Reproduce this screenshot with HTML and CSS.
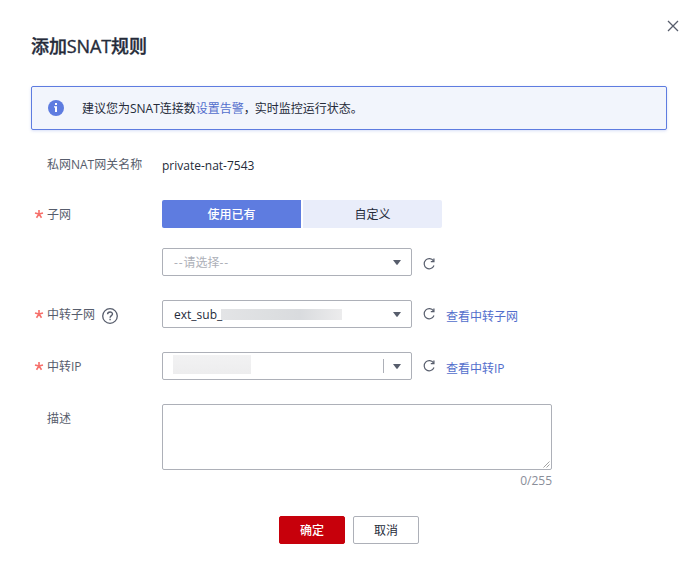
FILE: index.html
```html
<!DOCTYPE html>
<html lang="zh-CN">
<head>
<meta charset="utf-8">
<title>添加SNAT规则</title>
<link rel="stylesheet" href="styles.css">
</head>
<body>
<svg class="defs" width="0" height="0" aria-hidden="true">
  <symbol id="refresh" viewBox="0 0 14 14">
    <path d="M11.5 3.8A5.1 5.1 0 1 0 12 8.6" fill="none" stroke="currentColor" stroke-width="1.2"/>
    <path d="M11.9 1.6V4.6H8.8" fill="none" stroke="currentColor" stroke-width="1.3"/>
  </symbol>
  <symbol id="caret" viewBox="0 0 8 5"><path d="M0 0H8L4.6 4.6Q4 5.2 3.4 4.6Z" fill="currentColor"/></symbol>
  <symbol id="star" viewBox="0 0 10 10">
    <path d="M5 5V1M5 5L1 3.9M5 5L9 3.9M5 5L2.5 8.7M5 5L7.5 8.7" stroke="currentColor" stroke-width="1.6" fill="none"/>
  </symbol>
</svg>
<main class="dialog">
  <button class="close" aria-label="关闭">
    <svg width="12" height="12" viewBox="0 0 12 12"><path d="M1 1L11 11M11 1L1 11" stroke="currentColor" stroke-width="1.3"/></svg>
  </button>
  <h1 class="title">添加SNAT规则</h1>
  <div class="notice">
    <svg width="16" height="16" viewBox="0 0 16 16"><circle cx="8" cy="8" r="8" fill="#5e7ce0"/><path d="M7 3H9V5H7ZM6 6.2H9V12H7V7.4H6Z" fill="#fff"/></svg>
    <p class="notice-text">建议您为SNAT连接数<a>设置告警</a><span class="comma">，</span>实时监控运行状态。</p>
  </div>
  <form class="form">
    <div class="row name-row">
      <span class="label">私网NAT网关名称</span>
      <span class="value">private-nat-7543</span>
    </div>
    <div class="row">
      <span class="label"><svg class="star"><use href="#star"/></svg>子网</span>
      <div class="segments"><span class="segment active">使用已有</span><span class="segment">自定义</span></div>
    </div>
    <div class="row low">
      <span class="label"></span>
      <div class="select placeholder"><span class="picked"><span class="dashes">--</span>请选择<span class="dashes">--</span></span><svg class="caret"><use href="#caret"/></svg></div>
      <svg class="refresh"><use href="#refresh"/></svg>
    </div>
    <div class="row">
      <span class="label"><svg class="star"><use href="#star"/></svg>中转子网
        <svg class="help" width="16" height="16" viewBox="0 0 16 16"><circle cx="8" cy="8" r="7.3" fill="none" stroke="currentColor" stroke-width="1.3"/><path d="M5.6 6.3C5.6 3.2 10.5 3.3 10.5 6.1C10.5 7.7 8.1 7.7 8.1 9.7M8.1 10.8V12.3" fill="none" stroke="currentColor" stroke-width="1.4"/></svg>
      </span>
      <div class="select"><span class="picked">ext_sub_</span><span class="mask mask-subnet"></span><svg class="caret"><use href="#caret"/></svg></div>
      <svg class="refresh"><use href="#refresh"/></svg>
      <a class="view">查看中转子网</a>
    </div>
    <div class="row">
      <span class="label"><svg class="star"><use href="#star"/></svg>中转IP</span>
      <div class="select"><span class="mask mask-ip"></span><svg class="caret divided-caret"><use href="#caret"/></svg></div>
      <svg class="refresh"><use href="#refresh"/></svg>
      <a class="view">查看中转IP</a>
    </div>
    <div class="row note-row">
      <span class="label">描述</span>
      <div class="note">
        <div class="area"><svg width="7" height="7" viewBox="0 0 7 7"><path d="M.5 6.5L6.5 .5M3.5 6.5L6.5 3.5" stroke="#999" stroke-width=".9"/></svg></div>
        <span class="count">0/255</span>
      </div>
    </div>
    <div class="actions">
      <button type="button" class="button primary">确定</button>
      <button type="button" class="button">取消</button>
    </div>
  </form>
</main>
</body>
</html>
```
FILE: styles.css
```css
* { box-sizing: border-box; }
body {
  margin: 0;
  background: #fff;
  color: #252b3a;
  font: 12px/18px "Open Sans", "Noto Sans CJK SC", sans-serif;
}
.defs { position: absolute; }
.dialog { position: relative; height: 575px; padding: 33px 31px 0; }
.close {
  position: absolute;
  top: 20px;
  right: 19px;
  width: 12px;
  height: 12px;
  padding: 0;
  border: 0;
  background: none;
  color: #575d6c;
}
.close svg { display: block; }
.title {
  margin: 0 0 27px;
  font-size: 18px;
  line-height: 26px;
  font-weight: 500;
  letter-spacing: -.1px;
  -webkit-text-stroke: .35px currentColor;
}
.notice {
  display: flex;
  align-items: center;
  gap: 18px;
  height: 44px;
  padding: 0 16px;
  border: 1px solid #5e7ce0;
  border-radius: 2px;
  background: #f2f5fc;
  box-shadow: 0 1px 3px rgba(94, 124, 224, .25);
}
.notice-text { margin: 2px 0 0; }
.comma { margin-right: -1px; }
a { color: #526ecc; }
.form { padding-top: 20px; }
.row { display: flex; align-items: center; height: 28px; margin-bottom: 24px; }
.name-row { margin-bottom: 22px; }
.row:nth-child(2) { margin-bottom: 20px; }
.label {
  display: flex;
  align-items: center;
  position: relative;
  width: 131px;
  height: 28px;
  padding: 2px 0 0 16px;
  color: #575d6c;
  flex: none;
}
.value { padding-top: 4px; }
.star { position: absolute; left: 3px; top: 9px; width: 10px; height: 10px; color: #f66f6a; }
.help { margin: 1px 0 0 7px; }
.segments { display: flex; gap: 2px; }
.segment {
  width: 139px;
  height: 28px;
  padding-top: 1px;
  border-radius: 0 2px 2px 0;
  background: #e9edfa;
  line-height: 28px;
  text-align: center;
}
.segment.active { border-radius: 2px 0 0 2px; background: #5e7ce0; color: #fff; font-weight: 500; }
.select {
  display: flex;
  align-items: center;
  width: 250px;
  height: 28px;
  padding: 0 10px 0 11px;
  border: 1px solid #adb0b8;
  border-radius: 2px;
}
.picked { padding-top: 2px; }
.dashes { letter-spacing: .9px; }
.placeholder { color: #adb0b8; }
.mask { background: linear-gradient(90deg, #e3e4e6, #dcdee0 45%, #d9dbde 65%, #ececed); }
.mask-subnet { width: 121px; height: 11px; margin-left: -1px; }
.mask-ip { width: 78px; height: 19px; margin: -3px 0 0 -1px; background: linear-gradient(#f2f2f3, #ededee); }
.caret { width: 8px; height: 5px; margin-left: auto; color: #575d6c; }
.select:has(.divided-caret)::after { content: ""; order: 1; width: 1px; height: 14px; margin-left: auto; background: #adb0b8; }
.divided-caret { order: 2; margin-left: 9px; }
.refresh { width: 14px; height: 14px; margin-left: 10px; color: #575d6c; }
.low .refresh { margin-top: 4px; }
.view { margin: 5px 0 0 10px; }
.note-row { align-items: flex-start; height: 86px; margin-bottom: 26px; }
.note { width: 390px; }
.area {
  display: flex;
  align-items: flex-end;
  justify-content: flex-end;
  height: 66px;
  padding: 1px;
  border: 1px solid #adb0b8;
  border-radius: 2px;
}
.count { display: block; margin-top: 2px; color: #8a8e99; text-align: right; }
.actions { display: flex; justify-content: center; gap: 8px; }
.button {
  width: 66px;
  height: 28px;
  padding: 2px 0 0;
  border: 1px solid #adb0b8;
  border-radius: 2px;
  background: #fff;
  color: #252b3a;
  font: inherit;
}
.primary { border-color: #c7000b; background: #c7000b; color: #fff; font-weight: 500; }
```
